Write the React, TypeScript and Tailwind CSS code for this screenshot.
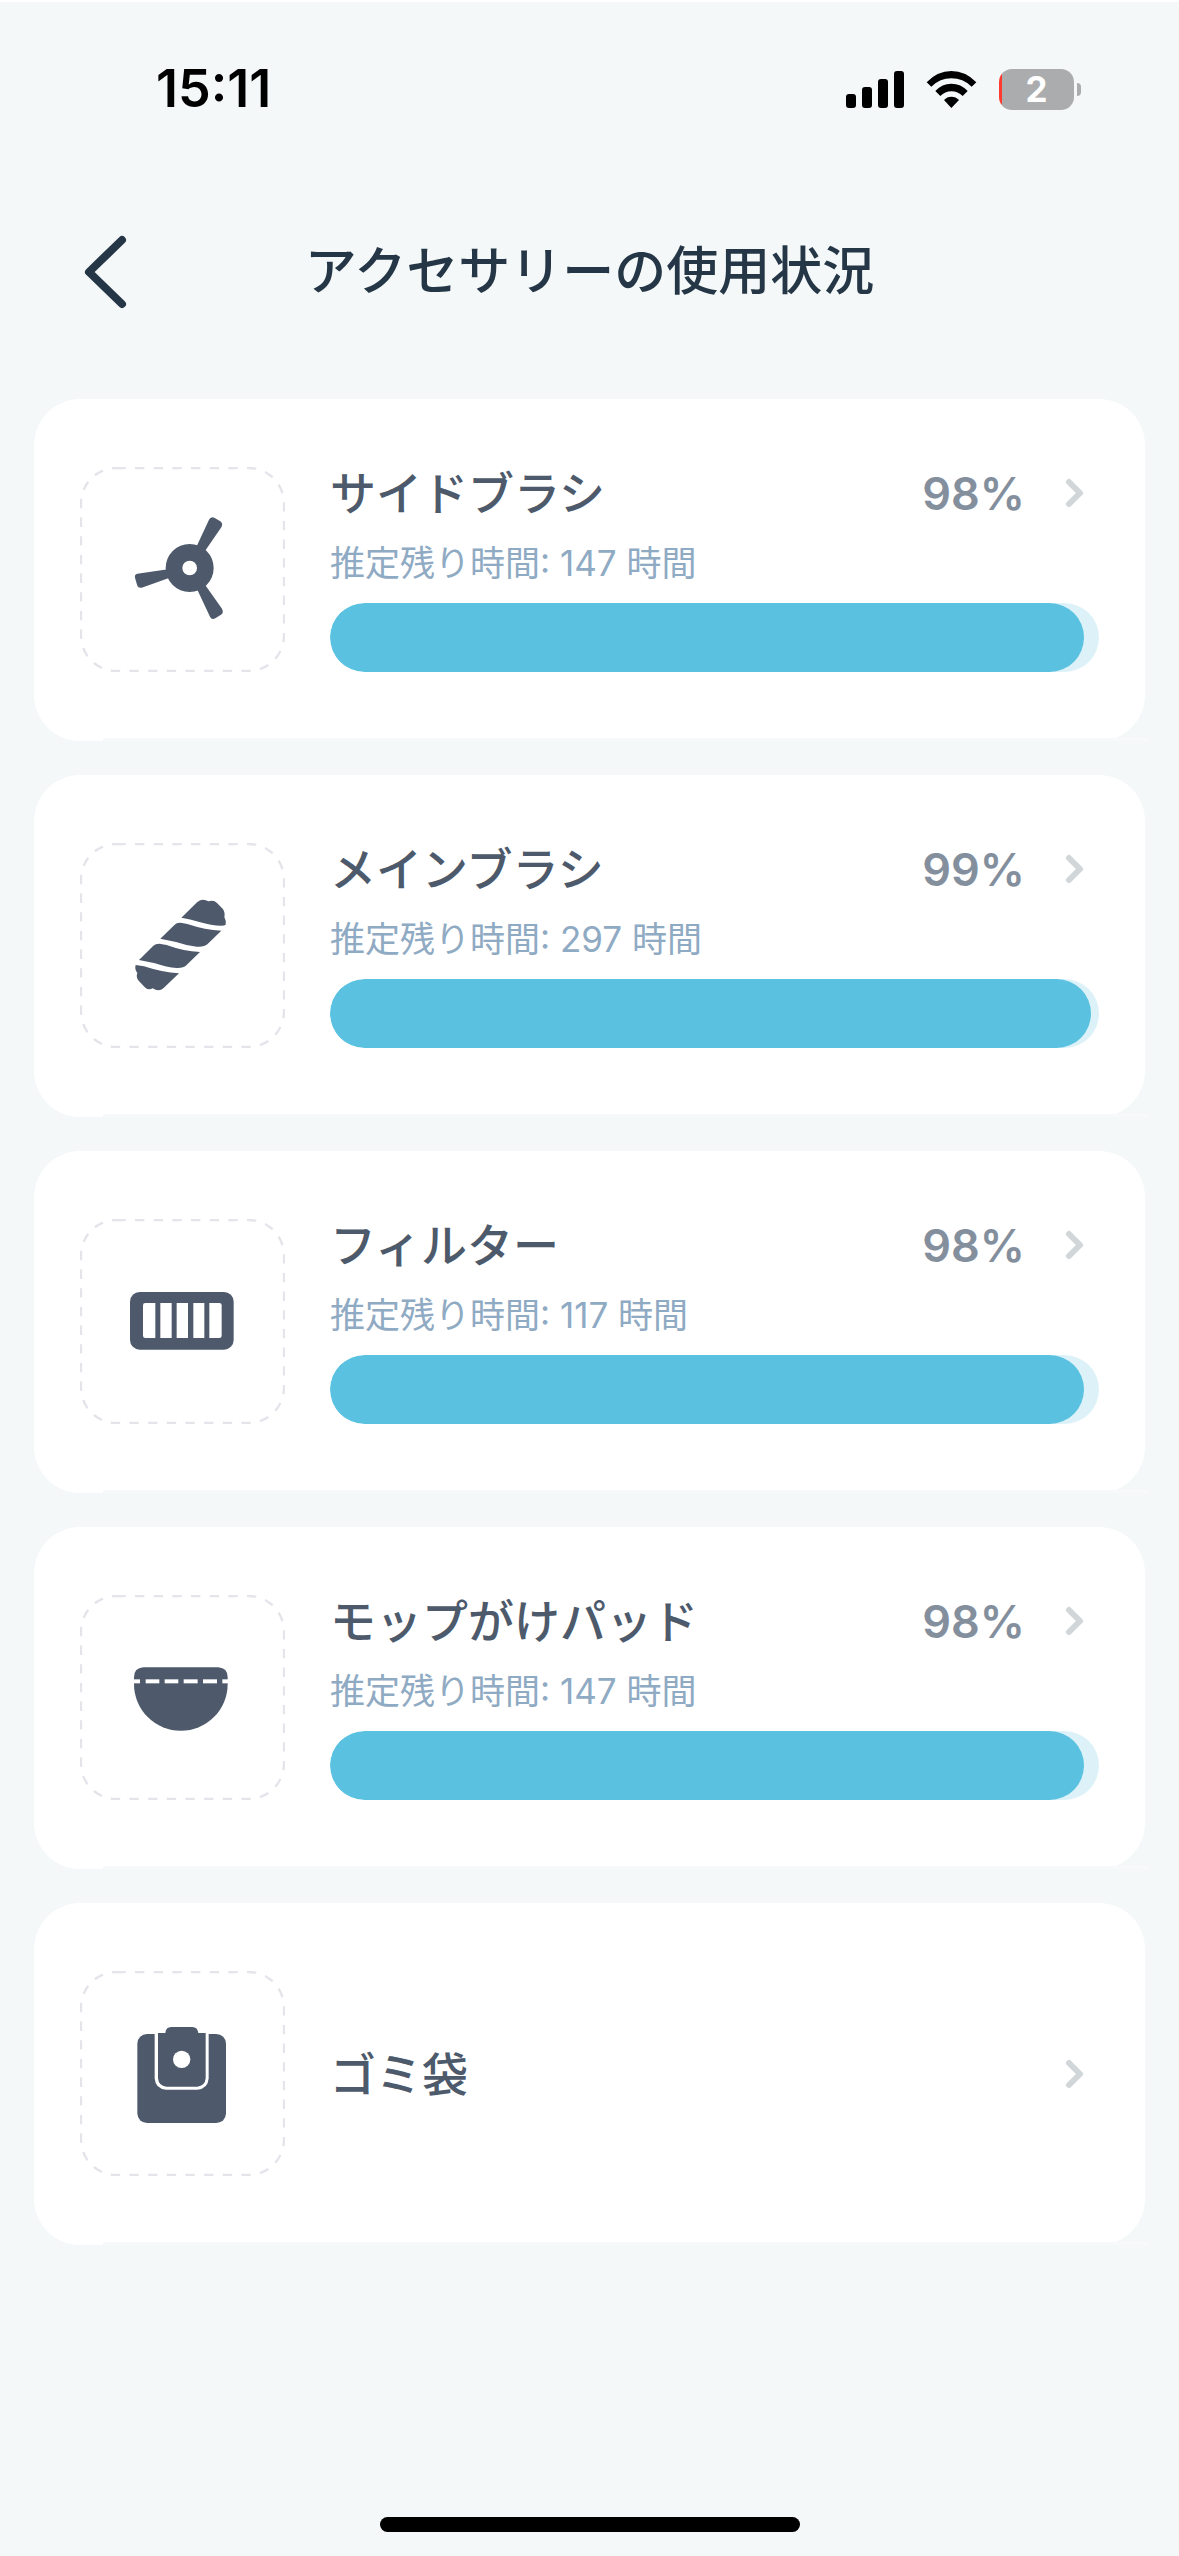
import React from "react";

type Accessory = {
  name: string;
  hours?: number;
  percent?: number;
  icon: React.ReactNode;
};

const SideBrushIcon = () => (
  <g fill="#4e5a6b">
    <path
      fillRule="evenodd"
      d="M329 231a72 72 0 1 0 0 144a72 72 0 1 0 0-144zM329 281a22 22 0 1 1 0 44a22 22 0 1 1 0-44z"
    />
    <path d="M350 238L387 158Q392 147 403 152L421 163Q430 169 424 181L375 252Z" />
    <path d="M264 307L172 320Q163 322 165 332L172 356Q175 364 185 362L267 333Z" />
    <path d="M352 368L390 449Q395 460 406 454L423 443Q432 437 426 425L375 353Z" />
  </g>
);

const MainBrushIcon = () => (
  <g fill="#4e5a6b" transform="translate(-30 -39)">
    <path d="M334 263L382 216Q398 203 415 214Q431 208 441 219L458 236Q466 246 463 261Q469 272 467 284Q464 287 453 287Q425 287 388 276Q360 267 334 263Z" />
    <path d="M271 326L314 284Q320 277 332 278L352 282Q406 300 454 302L412 343Q402 352 380 350Q350 347 318 336Z" />
    <path d="M207 390L250 347Q256 341 268 341L290 345Q341 364 390 366L349 406Q340 415 320 414Q290 412 255 400Z" />
    <path d="M197 405L222 409Q276 427 327 430L281 474Q267 487 248 475Q236 481 226 473L206 452Q197 442 202 429Q193 418 197 405Z" />
  </g>
);

const FilterIcon = () => (
  <g transform="translate(-30 -27)">
    <rect x="180" y="246" width="311" height="173" rx="29" fill="#4e5a6b" />
    <g fill="#fff">
      <path d="M226 279H256V384H226Q219 384 219 377V286Q219 279 226 279Z" />
      <rect x="271" y="279" width="34" height="105" />
      <rect x="320" y="279" width="34" height="105" />
      <rect x="370" y="279" width="33" height="105" />
      <path d="M418 279H448Q455 279 455 286V377Q455 384 448 384H418Z" />
    </g>
  </g>
);

const MopPadIcon = () => (
  <g transform="translate(-30 -45)">
    <path
      d="M220 262H445Q473 264 473 292V312A140.500 140.500 0 0 1 192 312V292Q192 264 220 262Z"
      fill="#4e5a6b"
    />
    <g fill="#fff">
      <rect x="190" y="298" width="20" height="12" />
      <rect x="227" y="298" width="41" height="12" />
      <rect x="284" y="298" width="41" height="12" />
      <rect x="341" y="298" width="42" height="12" />
      <rect x="399" y="298" width="42" height="12" />
      <rect x="457" y="298" width="20" height="12" />
    </g>
  </g>
);

const DustBagIcon = () => (
  <g transform="translate(-30 -33)">
    <rect x="202" y="222" width="266" height="267" rx="29" fill="#4e5a6b" />
    <path
      d="M254 215H416V355Q414 387 382 389H288Q256 387 254 355Z"
      fill="#fff"
    />
    <path
      d="M264 219H286Q287 201 304 201H367Q383 201 385 219H407V355Q405 378 382 380H289Q266 378 264 355Z"
      fill="#4e5a6b"
    />
    <circle cx="335" cy="298" r="26" fill="#fff" />
  </g>
);

const accessories: Accessory[] = [
  { name: "サイドブラシ", hours: 147, percent: 98, icon: <SideBrushIcon /> },
  { name: "メインブラシ", hours: 297, percent: 99, icon: <MainBrushIcon /> },
  { name: "フィルター", hours: 117, percent: 98, icon: <FilterIcon /> },
  { name: "モップがけパッド", hours: 147, percent: 98, icon: <MopPadIcon /> },
  { name: "ゴミ袋", icon: <DustBagIcon /> },
];

function StatusBar() {
  return (
    <div className="flex h-[174px] items-center justify-between pr-[98px] pl-[156px]">
      <time className="text-[52px] leading-none font-semibold text-black">15:11</time>
      <div className="flex items-center">
        <svg className="mr-[22px] h-[37px] w-[58px]" viewBox="0 0 58 37" aria-label="電波">
          <rect x="0" y="23" width="10" height="14" rx="3" />
          <rect x="16" y="16" width="10" height="21" rx="3" />
          <rect x="32" y="8" width="10" height="29" rx="3" />
          <rect x="48" y="0" width="10" height="37" rx="3" />
        </svg>
        <svg className="mr-[22px] h-[37px] w-[51px]" viewBox="0 0 153 111" aria-label="Wi-Fi">
          <path d="M2 34Q34 0 76 0Q119 0 151 34L137 47Q111 22 76 22Q42 22 16 47Z" />
          <path d="M28 60Q48 38 76 38Q105 38 125 60L110 75Q96 61 76 61Q57 61 43 75Z" />
          <path d="M54 87Q63 77 76 77Q90 77 99 87L76 111Z" />
        </svg>
        <div className="flex items-center" role="img" aria-label="バッテリー 2%">
          <div className="flex h-[41px] w-[75px] items-center justify-center overflow-hidden rounded-[13px] bg-linear-to-r from-[#ff3b30] from-4% to-[#abacae] to-4%">
            <span className="text-[35px] leading-none font-bold text-white">2</span>
          </div>
          <span className="ml-[3px] h-[13px] w-1 rounded-r-full bg-[#abacae]" />
        </div>
      </div>
    </div>
  );
}

function AccessoryCard({ name, hours, percent, icon }: Accessory) {
  return (
    <li>
      <button
        type="button"
        className="relative flex w-full items-center gap-[45px] rounded-[46px] bg-white px-[46px] pt-[68px] pb-[69px] text-left"
      >
        <svg className="size-[205px] shrink-0" viewBox="0 0 615 615" aria-hidden="true">
          <rect
            x="3"
            y="3"
            width="609"
            height="609"
            rx="106"
            fill="none"
            stroke="#e4e4ea"
            strokeWidth="7"
            strokeDasharray="28 28"
          />
          {icon}
        </svg>
        <span className="flex min-w-0 flex-1 flex-col">
          <span className="flex h-[52px] items-center pr-[15px]">
            <span className="flex-1 text-[46px] leading-none font-medium text-[#4d5a6b]">{name}</span>
            {percent !== undefined && (
              <span className="mr-10 text-[45px] leading-none font-semibold text-[#848f9e]">{percent}%</span>
            )}
            <svg
              className="h-[30px] w-[19px]"
              viewBox="0 0 19 30"
              fill="none"
              stroke="#d1d7d8"
              strokeWidth="6"
              strokeLinecap="round"
              strokeLinejoin="round"
              aria-hidden="true"
            >
              <path d="M4 4L15 15L4 26" />
            </svg>
          </span>
          {percent !== undefined && (
            <>
              <span className="mt-[22px] text-[35px] leading-[44px] font-normal text-[#8faac3]">
                推定残り時間: {hours} 時間
              </span>
              <span
                role="progressbar"
                aria-label={name}
                aria-valuenow={percent}
                aria-valuemin={0}
                aria-valuemax={100}
                className="mt-[18px] block h-[69px] overflow-hidden rounded-full bg-[#ddf2f8]"
              >
                <span className="block h-full rounded-full bg-[#5ac2e0]" style={{ width: `${percent}%` }} />
              </span>
            </>
          )}
        </span>
        <span className="absolute -right-1 bottom-0 left-[69px] h-[3px] bg-[#f7f9fa]" />
      </button>
    </li>
  );
}

export default function App() {
  return (
    <div
      lang="ja"
      className="flex min-h-screen flex-col border-t-2 border-white bg-[#f4f8f9] font-['Inter','Noto_Sans_CJK_JP',sans-serif]"
    >
      <StatusBar />
      <header className="grid h-48 grid-cols-[1fr_auto_1fr] items-center">
        <button type="button" aria-label="戻る" className="ml-[84px] justify-self-start">
          <svg
            className="h-[74px] w-[43px]"
            viewBox="0 0 43 74"
            fill="none"
            stroke="#253746"
            strokeWidth="8"
            strokeLinecap="round"
            strokeLinejoin="round"
          >
            <path d="M38 5L5 37L38 69" />
          </svg>
        </button>
        <h1 className="text-[52px] leading-none font-medium text-[#253746]">アクセサリーの使用状況</h1>
      </header>
      <main className="mt-[31px] px-[34px]">
        <ul className="flex flex-col gap-[34px]">
          {accessories.map((item) => (
            <AccessoryCard key={item.name} {...item} />
          ))}
        </ul>
      </main>
      <div className="mt-auto flex justify-center pt-8 pb-6">
        <div className="h-[15px] w-[420px] rounded-full bg-black" />
      </div>
    </div>
  );
}
